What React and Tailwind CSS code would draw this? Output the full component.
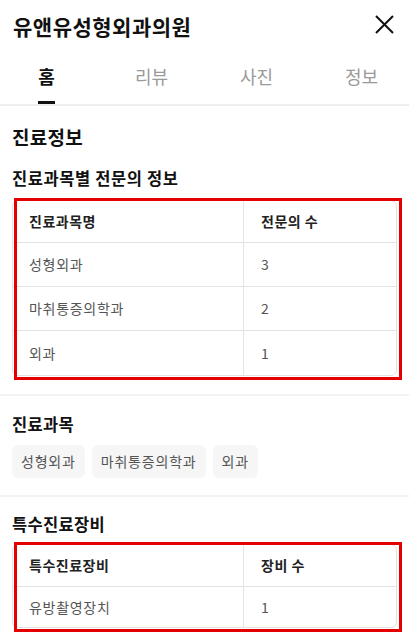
const font = { fontFamily: '"Noto Sans CJK KR", "Noto Sans", sans-serif' };

const tabs = ["홈", "리뷰", "사진", "정보"];
const specialists = [
  { name: "성형외과", count: "3" },
  { name: "마취통증의학과", count: "2" },
  { name: "외과", count: "1" },
];
const subjects = ["성형외과", "마취통증의학과", "외과"];
const equipment = [{ name: "유방촬영장치", count: "1" }];

function DataTable({ head, rows, rowClass }) {
  return (
    <div className="relative">
      <div className="rounded-[6px] border border-[#e3e3e3] overflow-hidden">
        <div className="flex h-[42px] items-center border-b border-[#e3e3e3]">
          <div className="w-[231px] h-full flex items-center pl-[16px] border-r border-[#e3e3e3] text-[14px] tracking-[0.5px] font-bold text-[#222]">
            {head[0]}
          </div>
          <div className="flex-1 pl-[17px] text-[14px] tracking-[0.5px] font-bold text-[#222]">{head[1]}</div>
        </div>
        {rows.map((row, i) => (
          <div
            key={row.name}
            className={
              "flex items-center " +
              rowClass +
              (i < rows.length - 1 ? " border-b border-[#e3e3e3]" : "")
            }
          >
            <div className="w-[231px] h-full flex items-center pl-[16px] border-r border-[#e3e3e3] text-[14px] tracking-[0.7px] text-[#555]">
              {row.name}
            </div>
            <div className="flex-1 pl-[17px] text-[14px] text-[#555]">{row.count}</div>
          </div>
        ))}
      </div>
      <div className="absolute top-[-2px] left-[2px] right-[-5px] bottom-[-4px] border-[3px] border-[#e40000] pointer-events-none" />
    </div>
  );
}

export default function App() {
  return (
    <div className="w-[409px] h-[635px] bg-white overflow-hidden" style={font}>
      <div className="h-[52px] flex items-center justify-between pl-[13px] pr-[15px]">
        <h1 className="text-[21px] tracking-[0.5px] font-bold text-[#111] leading-none">유앤유성형외과의원</h1>
        <svg width="19" height="19" viewBox="0 0 19 19" className="mt-[-3px]">
          <path d="M1 1L18 18M18 1L1 18" stroke="#111" strokeWidth="2" />
        </svg>
      </div>

      <div className="flex overflow-hidden border-b-2 border-[#eeeeee]">
        {tabs.map((t, i) => (
          <div
            key={t}
            className={"flex-none w-[105px] flex flex-col items-center " + (i === 0 ? "ml-[-6px]" : "")}
          >
            <div
              className={
                "h-[49px] flex items-center text-[18px] " +
                (i === 0 ? "font-bold text-[#111]" : "text-[#9a9a9a]")
              }
            >
              {t}
            </div>
            <div className={"h-[3px] w-[17px] " + (i === 0 ? "bg-[#111]" : "bg-transparent")} />
          </div>
        ))}
      </div>

      <section className="px-[12px] pt-[20px] pb-[18px]">
        <h2 className="h-[22px] flex items-center text-[19px] tracking-[0.3px] font-bold text-[#111]">진료정보</h2>
        <h3 className="mt-[20px] h-[20px] flex items-center text-[16.5px] tracking-[0.6px] font-bold text-[#111]">
          진료과목별 전문의 정보
        </h3>
        <div className="mt-[12px]">
          <DataTable head={["진료과목명", "전문의 수"]} rows={specialists} rowClass="h-[44px]" />
        </div>
      </section>

      <div className="h-[2px] bg-[#f2f2f2]" />

      <section className="px-[12px] pt-[18px] pb-[17px]">
        <h3 className="h-[20px] flex items-center text-[16.5px] tracking-[0.3px] font-bold text-[#111]">진료과목</h3>
        <div className="mt-[11px] flex gap-[7px]">
          {subjects.map((s) => (
            <span
              key={s}
              className="h-[33px] px-[9px] flex items-center rounded-[6px] bg-[#f6f6f6] text-[14px] tracking-[0.8px] text-[#555]"
            >
              {s}
            </span>
          ))}
        </div>
      </section>

      <div className="h-[2px] bg-[#f2f2f2]" />

      <section className="px-[12px] pt-[17px]">
        <h3 className="h-[20px] flex items-center text-[16.5px] tracking-[0.3px] font-bold text-[#111]">특수진료장비</h3>
        <div className="mt-[10px]">
          <DataTable head={["특수진료장비", "장비 수"]} rows={equipment} rowClass="h-[40px]" />
        </div>
      </section>
    </div>
  );
}
